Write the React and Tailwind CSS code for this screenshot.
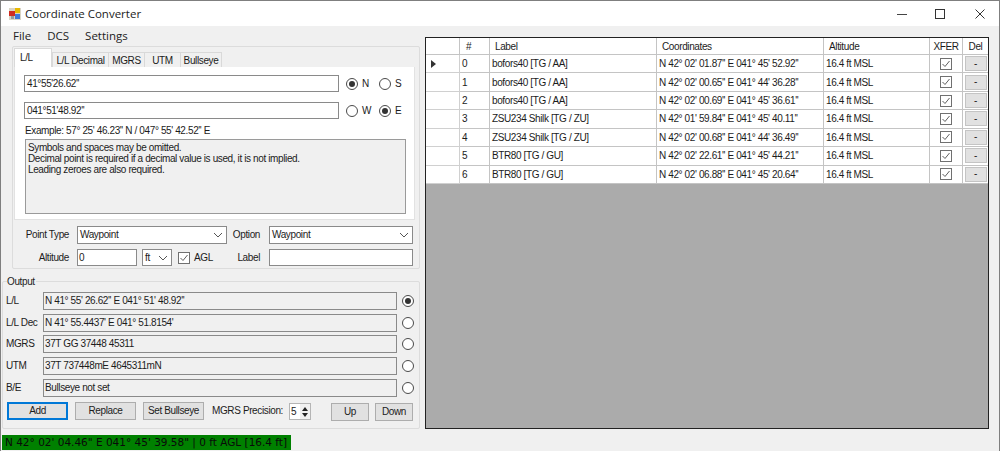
const Chevron = () => (
  <svg width="10" height="6" viewBox="0 0 10 6" className="shrink-0"><path d="M1 1l4 4 4-4" fill="none" stroke="#555" strokeWidth="1" /></svg>
);

const Radio = ({ on }) => (
  <span className="w-[12px] h-[12px] rounded-full border border-[#4a4a4a] bg-white flex items-center justify-center shrink-0">
    {on && <span className="w-[6px] h-[6px] rounded-full bg-[#333]" />}
  </span>
);

const Check = ({ className = "" }) => (
  <span className={`w-[12px] h-[12px] border border-[#707070] bg-white flex items-center justify-center shrink-0 ${className}`}>
    <svg width="10" height="10" viewBox="0 0 10 10"><path d="M1.5 5l2.5 2.5 4.5-5.5" fill="none" stroke="#606060" strokeWidth="1" /></svg>
  </span>
);

const Input = ({ className = "", children }) => (
  <div className={`border border-[#8a8a8a] bg-white flex items-center pl-[1px] overflow-hidden whitespace-nowrap ${className}`}>{children}</div>
);

const Select = ({ className = "", children }) => (
  <div className={`border border-[#8a8a8a] bg-white flex items-center justify-between pl-[2px] pr-[3px] ${className}`}>
    <span>{children}</span>
    <Chevron />
  </div>
);

const Button = ({ className = "", children }) => (
  <div className={`h-[18px] bg-[#e1e1e1] border border-[#adadad] flex items-center justify-center ${className}`}>{children}</div>
);

const RadioLabel = ({ on, children }) => (
  <span className="w-[33px] flex items-center gap-[4px]"><Radio on={on} /><span>{children}</span></span>
);

const outputs = [
  ["L/L", "N 41° 55' 26.62'' E 041° 51' 48.92''", true, "mt-0"],
  ["L/L Dec", "N 41° 55.4437' E 041° 51.8154'", false, "mt-[4px]"],
  ["MGRS", "37T GG 37448 45311", false, "mt-[3px]"],
  ["UTM", "37T 737448mE 4645311mN", false, "mt-[4px]"],
  ["B/E", "Bullseye not set", false, "mt-[4px]"],
];

const rows = [
  ["0", "bofors40 [TG / AA]", "N 42° 02' 01.87'' E 041° 45' 52.92''"],
  ["1", "bofors40 [TG / AA]", "N 42° 02' 00.65'' E 041° 44' 36.28''"],
  ["2", "bofors40 [TG / AA]", "N 42° 02' 00.69'' E 041° 45' 36.61''"],
  ["3", "ZSU234 Shilk [TG / ZU]", "N 42° 01' 59.84'' E 041° 45' 40.11''"],
  ["4", "ZSU234 Shilk [TG / ZU]", "N 42° 02' 00.68'' E 041° 44' 36.49''"],
  ["5", "BTR80 [TG / GU]", "N 42° 02' 22.61'' E 041° 45' 44.21''"],
  ["6", "BTR80 [TG / GU]", "N 42° 02' 06.88'' E 041° 45' 20.64''"],
];

const gridCols = "grid grid-cols-[34px_30px_167px_167px_106px_33px_25px]";

export default function App() {
  return (
    <div className="w-[1000px] h-[451px] flex flex-col bg-[#f0f0f0] border-t border-x border-[#7f7f7f] overflow-hidden text-[10px] tracking-[-0.38px] leading-none text-[#1c1c1c] font-['Liberation_Sans',sans-serif]">
      {/* title bar */}
      <div className="h-[25px] bg-white flex items-center shrink-0 tracking-normal">
        <svg width="12" height="12" viewBox="0 0 12 12" className="ml-[8px]">
          <rect x="0" y="0" width="12" height="12" fill="#d9d4c4" />
          <rect x="6" y="0" width="5" height="5" fill="#e8b800" />
          <rect x="0" y="3" width="6" height="5" fill="#d02c20" />
          <rect x="6" y="6" width="5" height="5" fill="#3f78d8" />
          <rect x="2" y="8" width="3" height="3" fill="#9a9a9a" />
        </svg>
        <span className="ml-[4px] text-[11.5px] text-[#222] font-['Open_Sans',sans-serif]">Coordinate Converter</span>
        <div className="ml-auto flex items-center pr-[14px]">
          <svg width="10" height="10" viewBox="0 0 10 10" className="mr-[28px]"><path d="M0 5.5h10" stroke="#444" /></svg>
          <svg width="10" height="10" viewBox="0 0 10 10" className="mr-[30px]"><rect x="0.5" y="0.5" width="9" height="9" fill="none" stroke="#333" /></svg>
          <svg width="10" height="10" viewBox="0 0 10 10"><path d="M0.5 0.5l9 9M9.5 0.5l-9 9" stroke="#333" /></svg>
        </div>
      </div>

      {/* body */}
      <div className="flex-1 flex min-h-0">
        {/* left */}
        <div className="w-[424px] shrink-0 flex flex-col">
          <div className="h-[20px] flex items-center pl-[12px] text-[11.5px] tracking-normal text-[#222] font-['Open_Sans',sans-serif] shrink-0">
            <span>File</span>
            <span className="ml-[16px]">DCS</span>
            <span className="ml-[16px]">Settings</span>
          </div>

          {/* top group */}
          <div className="ml-[11px] w-[408px] h-[223px] border border-[#dcdcdc] rounded-[2px] flex flex-col shrink-0">
            <div className="flex items-end h-[20px] ml-[1px] shrink-0">
              <div className="w-[38px] h-[19px] bg-white border border-b-0 border-[#d9d9d9] pl-[5px] pt-[4px]">L/L</div>
              <div className="w-[57px] h-[15px] bg-[#f0f0f0] border border-b-0 border-[#d9d9d9] text-center pt-[3px]">L/L Decimal</div>
              <div className="w-[36px] h-[15px] bg-[#f0f0f0] border border-b-0 border-l-0 border-[#d9d9d9] text-center pt-[3px]">MGRS</div>
              <div className="w-[36px] h-[15px] bg-[#f0f0f0] border border-b-0 border-l-0 border-[#d9d9d9] text-center pt-[3px]">UTM</div>
              <div className="w-[41px] h-[15px] bg-[#f0f0f0] border border-b-0 border-l-0 border-[#d9d9d9] text-center pt-[3px]">Bullseye</div>
            </div>
            <div className="ml-[1px] w-[401px] h-[153px] bg-white border border-[#e2e2e2] border-t-0 pl-[9px] pt-[8px] shrink-0">
              <div className="flex items-center h-[17px]">
                <Input className="w-[315px] h-[17px] !pl-[2px]">41°55'26.62''</Input>
                <span className="ml-[7px] flex"><RadioLabel on>N</RadioLabel><RadioLabel>S</RadioLabel></span>
              </div>
              <div className="flex items-center h-[17px] mt-[10px]">
                <Input className="w-[315px] h-[17px] !pl-[2px]">041°51'48.92''</Input>
                <span className="ml-[7px] flex"><RadioLabel>W</RadioLabel><RadioLabel on>E</RadioLabel></span>
              </div>
              <div className="mt-[6px] ml-[1px] h-[12px] flex items-center">Example: 57° 25' 46.23'' N / 047° 55' 42.52'' E</div>
              <div className="mt-[2px] ml-[1px] w-[381px] h-[75px] bg-[#f0f0f0] border border-[#9a9a9a] pl-[2px] pt-[2px] leading-[11px]">
                <div>Symbols and spaces may be omitted.</div>
                <div>Decimal point is required if a decimal value is used, it is not implied.</div>
                <div>Leading zeroes are also required.</div>
              </div>
            </div>
            <div className="flex items-center h-[18px] mt-[6px] shrink-0">
              <span className="w-[56px] text-right">Point Type</span>
              <Select className="ml-[8px] w-[150px] h-[18px]">Waypoint</Select>
              <span className="w-[33px] text-right">Option</span>
              <Select className="ml-[9px] w-[144px] h-[18px]">Waypoint</Select>
            </div>
            <div className="flex items-center h-[17px] mt-[5px] shrink-0">
              <span className="w-[56px] text-right">Altitude</span>
              <Input className="ml-[8px] w-[60px] h-[17px]">0</Input>
              <Select className="ml-[5px] w-[30px] h-[17px]">ft</Select>
              <Check className="ml-[6px]" />
              <span className="ml-[4px] w-[25px]">AGL</span>
              <span className="w-[41px] text-right">Label</span>
              <Input className="ml-[9px] w-[144px] h-[17px]" />
            </div>
          </div>

          {/* output group */}
          <div className="ml-[1px] mt-[12px] w-[418px] h-[148px] border border-[#dcdcdc] rounded-[2px] relative shrink-0">
            <span className="absolute left-[4px] -top-[5px] bg-[#f0f0f0] pr-[1px]">Output</span>
            <div className="pt-[10px] pl-[3px]">
              {outputs.map(([label, value, on, mt]) => (
                <div key={label} className={`flex items-center h-[18px] ${mt}`}>
                  <span className="w-[37px]">{label}</span>
                  <Input className="w-[354px] h-[18px] !bg-[#f0f0f0]">{value}</Input>
                  <span className="ml-[5px]"><Radio on={on} /></span>
                </div>
              ))}
              <div className="flex items-start mt-[5px] ml-[1px]">
                <Button className="w-[61px] !border-[#0078d7] border-2">Add</Button>
                <Button className="ml-[7px] w-[61px]">Replace</Button>
                <Button className="ml-[7px] w-[61px]">Set Bullseye</Button>
                <span className="ml-[8px] h-[18px] flex items-center w-[77px] whitespace-nowrap">MGRS Precision:</span>
                <div className="w-[22px] h-[17px] mt-[1px] border border-[#b5b5b5] bg-white flex items-center pl-[1px]">
                  <span className="flex-1">5</span>
                  <div className="w-[10px] h-full flex flex-col items-center justify-center gap-[2px] bg-[#f0f0f0]">
                    <svg width="6" height="4" viewBox="0 0 6 4"><path d="M3 0l3 4H0z" fill="#222" /></svg>
                    <svg width="6" height="4" viewBox="0 0 6 4"><path d="M3 4L0 0h6z" fill="#222" /></svg>
                  </div>
                </div>
                <Button className="ml-[20px] mt-[1px] w-[38px]">Up</Button>
                <Button className="ml-[6px] mt-[1px] w-[38px]">Down</Button>
              </div>
            </div>
          </div>
        </div>

        {/* right grid */}
        <div className="pt-[11px] pl-0">
          <div className="w-[564px] h-[392px] border border-[#222] bg-[#ababab] flex flex-col">
            <div className={`${gridCols} h-[17px] bg-white shrink-0`}>
              <div className="border-r border-b border-[#c4c4c4]" />
              <div className="border-r border-b border-[#c4c4c4] flex items-center pl-[6px] pt-[1px]">#</div>
              <div className="border-r border-b border-[#c4c4c4] flex items-center pl-[5px] pt-[1px]">Label</div>
              <div className="border-r border-b border-[#c4c4c4] flex items-center pl-[5px] pt-[1px]">Coordinates</div>
              <div className="border-r border-b border-[#c4c4c4] flex items-center pl-[5px] pt-[1px]">Altitude</div>
              <div className="border-r border-b border-[#c4c4c4] flex items-center justify-center pt-[1px]">XFER</div>
              <div className="border-b border-[#c4c4c4] flex items-center justify-center pt-[1px]">Del</div>
            </div>
            {rows.map((r, i) => (
              <div key={r[0]} className={`${gridCols} h-[18.43px] bg-white shrink-0`}>
                <div className="border-r border-b border-[#d0d0d0] flex items-center pl-[5px]">
                  {i === 0 && <svg width="5" height="8" viewBox="0 0 5 8"><path d="M0 0l5 4-5 4z" fill="#333" /></svg>}
                </div>
                <div className="border-r border-b border-[#c4c4c4] flex items-center pl-[2px] pt-[1px]">{r[0]}</div>
                <div className="border-r border-b border-[#c4c4c4] flex items-center pl-[2px] pt-[1px] whitespace-nowrap">{r[1]}</div>
                <div className="border-r border-b border-[#c4c4c4] flex items-center pl-[2px] pt-[1px] whitespace-nowrap">{r[2]}</div>
                <div className="border-r border-b border-[#c4c4c4] flex items-center pl-[2px] pt-[1px]">16.4 ft MSL</div>
                <div className="border-r border-b border-[#c4c4c4] flex items-center justify-center"><Check /></div>
                <div className="border-b border-[#c4c4c4] flex items-center justify-center">
                  <div className="w-[22px] h-[15px] bg-[#e1e1e1] border border-[#c4c4c4] flex items-center justify-center">-</div>
                </div>
              </div>
            ))}
          </div>
        </div>
      </div>

      {/* status */}
      <div className="h-[18px] shrink-0 flex items-center pl-[1px]">
        <div className="w-[289px] h-[15px] bg-[#008000] flex items-center pl-[3px] whitespace-nowrap text-[10.5px] tracking-normal text-[#0a0a0a] font-['DejaVu_Sans',sans-serif]">N 42° 02' 04.46" E 041° 45' 39.58" | 0 ft AGL [16.4 ft]</div>
      </div>
    </div>
  );
}
